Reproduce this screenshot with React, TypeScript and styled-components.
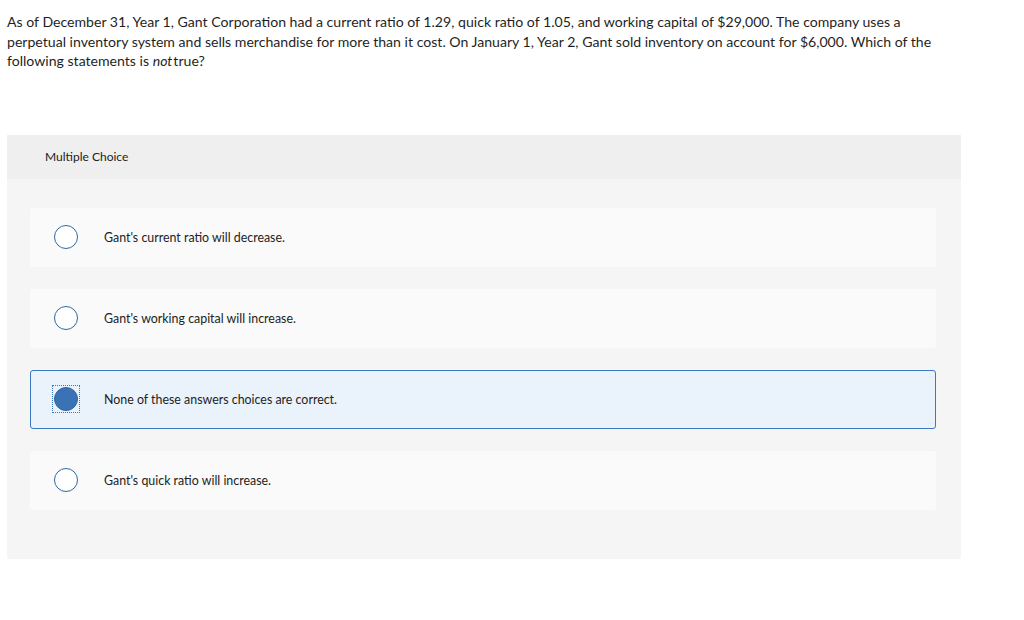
import styled, { createGlobalStyle } from 'styled-components'

const GlobalStyle = createGlobalStyle`
    body {
        margin: 0;
        background: #ffffff;
        font-family: Lato, "Open Sans", sans-serif;
        color: #222222;
    }
`

const Page = styled.div`
    width: 1024px;
    padding: 12px 7px 0 7px;
    box-sizing: border-box;
`

const Question = styled.p`
    margin: 0;
    width: 980px;
    font-size: 14.1px;
    line-height: 19.5px;
    color: #1f1f1f;
    white-space: nowrap;
    em {
        font-style: italic;
        margin-right: 1px;
    }
`

const Panel = styled.section`
    margin-top: 64px;
    width: 954px;
    height: 424px;
    background: #f5f5f5;
    border-radius: 2px;
`

const PanelHeader = styled.div`
    height: 44px;
    display: flex;
    align-items: center;
    padding-left: 38px;
    background: #efefef;
    font-size: 12px;
    color: #222222;
`

const Options = styled.div`
    display: flex;
    flex-direction: column;
    gap: 22px;
    padding: 29px 25px 0 23px;
`

const Option = styled.label<{ $selected?: boolean }>`
    height: 59px;
    display: flex;
    align-items: center;
    box-sizing: border-box;
    padding-left: 21px;
    background: ${p => (p.$selected ? '#eaf2fb' : '#fafafa')};
    border: 1px solid ${p => (p.$selected ? '#3a78c2' : 'transparent')};
    border-radius: 3px;
    font-size: 12.4px;
    color: #222222;
`

const RadioWrap = styled.span<{ $focused?: boolean }>`
    width: 28px;
    height: 28px;
    display: flex;
    align-items: center;
    justify-content: center;
    box-sizing: border-box;
    border: 1.5px dotted ${p => (p.$focused ? '#3a78c2' : 'transparent')};
    margin-right: 24px;
`

const Radio = styled.span<{ $checked?: boolean }>`
    width: 24px;
    height: 24px;
    border-radius: 50%;
    box-sizing: border-box;
    border: 1px solid #2f66a3;
    background: ${p => (p.$checked ? '#3a72b6' : '#ffffff')};
`

const answers = [
    "Gant's current ratio will decrease.",
    "Gant's working capital will increase.",
    'None of these answers choices are correct.',
    "Gant's quick ratio will increase."
]

const App = () => {
    const selected = 2

    return (
        <Page>
            <GlobalStyle />
            <Question>
                As of December 31, Year 1, Gant Corporation had a current ratio of 1.29, quick ratio of 1.05, and
                working capital of $29,000. The company uses a<br />
                perpetual inventory system and sells merchandise for more than it cost. On January 1, Year 2, Gant
                sold inventory on account for $6,000. Which of the<br />
                following statements is <em>not</em>true?
            </Question>
            <Panel>
                <PanelHeader>Multiple Choice</PanelHeader>
                <Options>
                    {answers.map((text, i) => (
                        <Option key={text} $selected={i === selected}>
                            <RadioWrap $focused={i === selected}>
                                <Radio $checked={i === selected} />
                            </RadioWrap>
                            {text}
                        </Option>
                    ))}
                </Options>
            </Panel>
        </Page>
    )
}

export default App
